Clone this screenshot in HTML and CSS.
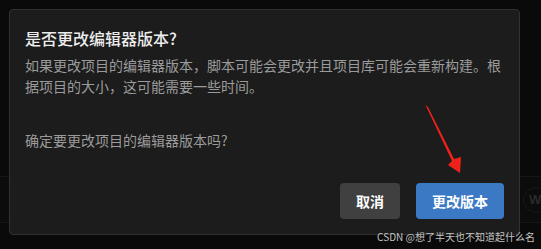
FILE: index.html
```html
<!DOCTYPE html>
<html lang="zh-CN">
<head>
    <meta charset="UTF-8">
    <title>更改编辑器版本</title>
    <link rel="stylesheet" href="styles.css">
</head>
<body>
    <div class="backdrop">
        <div class="row-behind">
            <span class="avatar">W</span>
        </div>
    </div>

    <div class="page">
        <div class="dialog">
            <h2 class="title">是否更改编辑器版本?</h2>
            <p class="text">如果更改项目的编辑器版本，脚本可能会更改并且项目库可能会重新构建。根据项目的大小，这可能需要一些时间。</p>
            <p class="text confirm">确定要更改项目的编辑器版本吗?</p>
            <div class="buttons">
                <button class="btn btn-cancel">取消</button>
                <button class="btn btn-ok">更改版本</button>
            </div>
        </div>
    </div>

    <!-- 标注箭头 -->
    <svg class="arrow" width="541" height="249" viewBox="0 0 541 249">
        <polygon points="425.5,105 428,107 454,159 461,157 460,173 448,165 452,161" fill="#f0201a"/>
    </svg>

    <div class="watermark">CSDN @想了半天也不知道起什么名</div>
</body>
</html>
```

FILE: styles.css
```css
html, body {
    margin: 0;
    padding: 0;
}

body {
    width: 541px;
    height: 249px;
    overflow: hidden;
    position: relative;
    background-color: #0a0a0a;
    font-family: "Noto Sans CJK SC", "Noto Sans", sans-serif;
}

/* 对话框后面的页面 */
.backdrop {
    position: absolute;
    inset: 0;
}

.row-behind {
    position: absolute;
    left: 0;
    right: 0;
    top: 176px;
    height: 45px;
    background-color: #0c0c0c;
    border-top: 1px solid #151515;
    border-bottom: 1px solid #151515;
}

.avatar {
    position: absolute;
    left: 523px;
    top: 10px;
    width: 24px;
    height: 24px;
    border-radius: 50%;
    border: 1px solid #181818;
    color: #2a2a2a;
    font-family: "Liberation Sans", sans-serif;
    font-weight: bold;
    font-size: 13px;
    line-height: 24px;
    text-indent: 5px;
}

.page {
    position: relative;
    padding: 9px;
}

.dialog {
    width: 479px;
    height: 193px;
    padding: 16px 15px 15px 15px;
    background-color: #1c1c1c;
    border: 1px solid #313131;
    border-radius: 4px;
    display: flex;
    flex-direction: column;
}

.title {
    margin: 0;
    font-size: 16px;
    line-height: 24px;
    font-weight: 500;
    color: #ececec;
}

.text {
    margin: 5px 0 0 0;
    font-size: 14px;
    line-height: 21px;
    color: #9b9b9b;
}

.confirm {
    margin-top: 33px;
}

.buttons {
    margin-top: auto;
    display: flex;
    justify-content: flex-end;
    gap: 16px;
}

.btn {
    height: 36px;
    padding: 0 16px;
    border: none;
    border-radius: 4px;
    font-family: inherit;
    font-size: 14px;
    font-weight: bold;
    color: #ffffff;
}

.btn-cancel {
    background-color: #404040;
}

.btn-ok {
    background-color: #3b79c4;
}

.arrow {
    position: absolute;
    left: 0;
    top: 0;
}

.watermark {
    position: absolute;
    right: 6px;
    top: 230px;
    font-size: 10px;
    line-height: 14px;
    color: #c4c4c4;
    white-space: nowrap;
}
```
